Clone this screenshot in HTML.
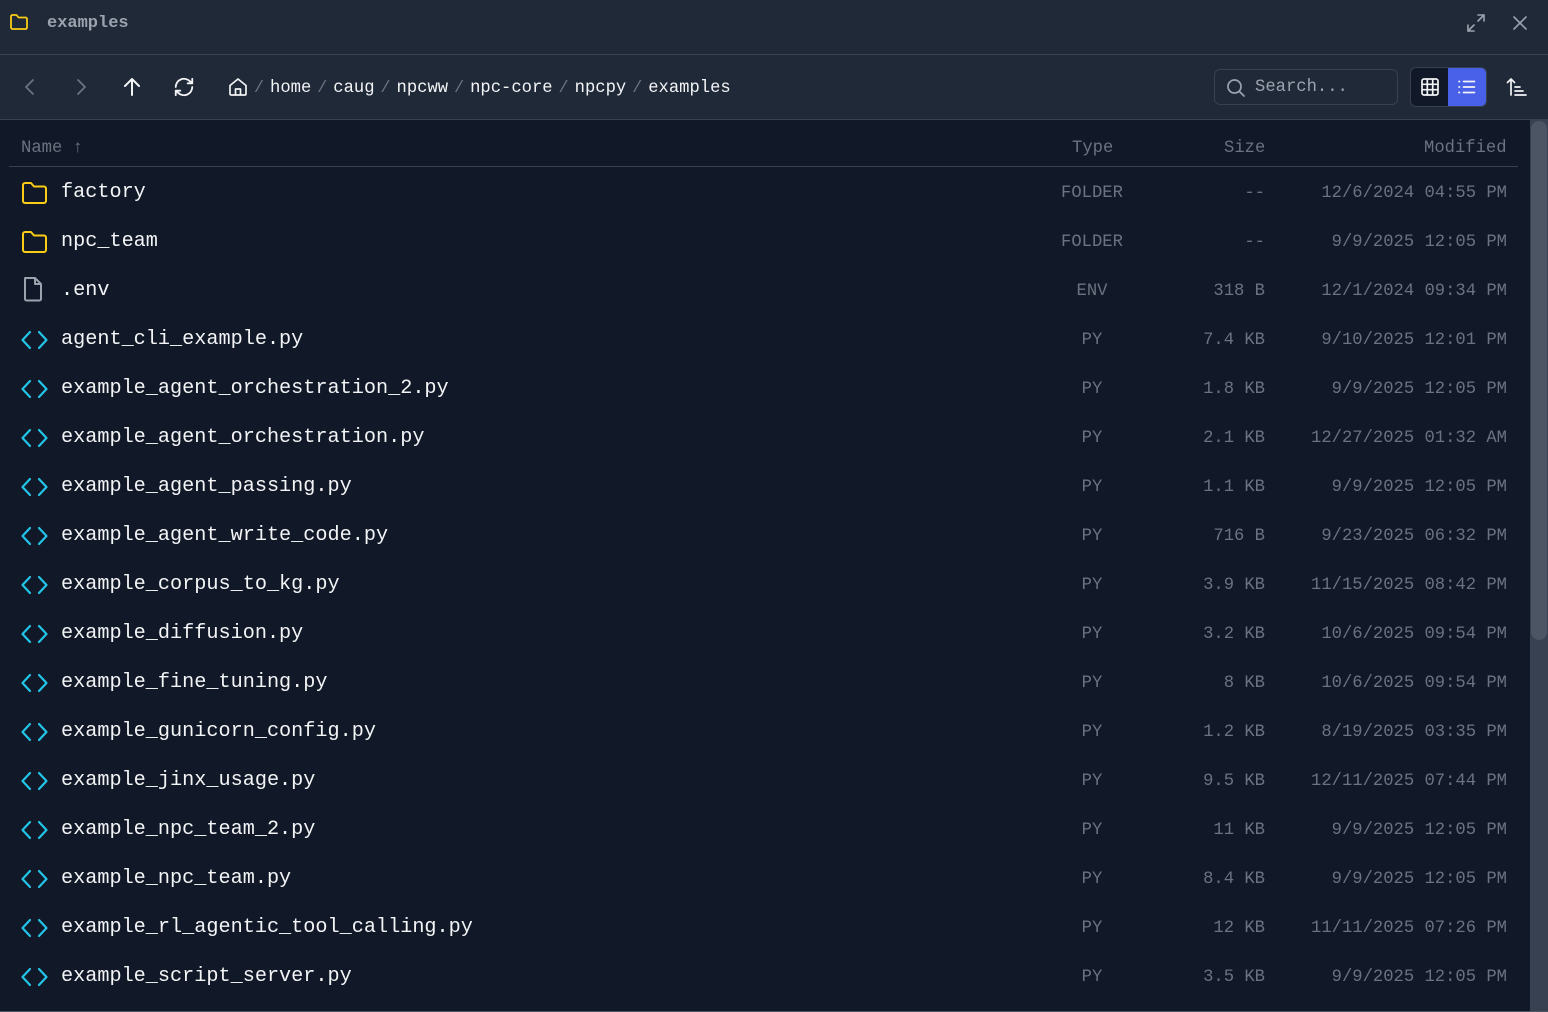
<!DOCTYPE html>
<html><head><meta charset="utf-8"><style>
*{margin:0;padding:0;box-sizing:border-box}
body{width:1548px;height:1012px;background:#111827;font-family:"Liberation Mono",monospace;overflow:hidden;position:relative;color:#e5e7eb}
.abs{position:absolute}
#title{left:0;top:0;width:1548px;height:55px;background:#1f2937;border-bottom:1px solid #374151}
#tool{left:0;top:55px;width:1548px;height:65px;background:#1f2937;border-bottom:1px solid #374151}
.t{white-space:pre;line-height:20px}
.hdr{color:#6b7280;font-size:17.2px}
.row{position:absolute;left:0;width:1530px;height:49px}
.nm{position:absolute;left:61px;top:15px;font-size:20.2px;color:#f3f4f6;white-space:pre;line-height:22px}
.ty{position:absolute;left:1042px;width:100px;text-align:center;top:17px;font-size:17.2px;color:#6b7280;line-height:20px}
.sz{position:absolute;right:265px;top:17px;font-size:17.2px;color:#6b7280;line-height:20px;white-space:pre}
.md{position:absolute;right:23px;top:17px;font-size:17.2px;color:#6b7280;line-height:20px;white-space:pre}
.ic{position:absolute;left:20px;top:12px}
.bc{color:#f3f4f6;font-size:17.2px}
.sep{color:#6b7280;font-size:17px;display:inline-block;width:22px;text-align:center}
</style></head><body>
<div id="title" class="abs">
<svg class="abs" style="left:9px;top:13px" width="20" height="18" viewBox="0 0 20 18" fill="none" stroke="#facc15" stroke-width="1.8" stroke-linejoin="round"><path d="M2 3.5a1.5 1.5 0 0 1 1.5-1.5h4l2 2.5h7a1.5 1.5 0 0 1 1.5 1.5v8.5a1.5 1.5 0 0 1-1.5 1.5h-13A1.5 1.5 0 0 1 2 14.5z"/></svg>
<div class="abs t" style="left:47px;top:14px;font-size:17px;font-weight:bold;color:#9ca3af">examples</div>
<svg class="abs" style="left:1466px;top:13px" width="20" height="20" viewBox="0 0 20 20" fill="none" stroke="#9ca3af" stroke-width="1.6" stroke-linecap="round"><path d="M12 2h6v6M18 2l-6 6M8 18H2v-6M2 18l6-6"/></svg>
<svg class="abs" style="left:1512px;top:15px" width="16" height="16" viewBox="0 0 16 16" stroke="#9ca3af" stroke-width="1.6" stroke-linecap="round"><path d="M2 2l12 12M14 2L2 14"/></svg>
</div>
<div id="tool" class="abs">
<svg class="abs" style="left:22px;top:23px" width="16" height="18" viewBox="0 0 16 18" fill="none" stroke="#6b7280" stroke-width="1.8" stroke-linecap="round" stroke-linejoin="round"><path d="M11 2L4 9l7 7"/></svg>
<svg class="abs" style="left:73px;top:23px" width="16" height="18" viewBox="0 0 16 18" fill="none" stroke="#6b7280" stroke-width="1.8" stroke-linecap="round" stroke-linejoin="round"><path d="M5 2l7 7-7 7"/></svg>
<svg class="abs" style="left:121px;top:21px" width="22" height="22" viewBox="0 0 22 22" fill="none" stroke="#f3f4f6" stroke-width="2" stroke-linecap="round" stroke-linejoin="round"><path d="M11 19V3M4 10l7-7 7 7"/></svg>
<svg class="abs" style="left:173px;top:21px" width="22" height="22" viewBox="0 0 24 24" fill="none" stroke="#f3f4f6" stroke-width="2" stroke-linecap="round" stroke-linejoin="round"><path d="M3 12a9 9 0 0 1 15.5-6.2L21 8M21 3v5h-5M21 12a9 9 0 0 1-15.5 6.2L3 16M3 21v-5h5"/></svg>
<svg class="abs" style="left:228px;top:22px" width="20" height="20" viewBox="0 0 20 20" fill="none" stroke="#f3f4f6" stroke-width="1.7" stroke-linejoin="round"><path d="M2 8.5L10 2l8 6.5V17a1 1 0 0 1-1 1H3a1 1 0 0 1-1-1z"/><path d="M7.5 18v-6h5v6"/></svg>
<div class="abs t" style="left:248px;top:23px"><span class="sep">/</span><span class="bc">home</span><span class="sep">/</span><span class="bc">caug</span><span class="sep">/</span><span class="bc">npcww</span><span class="sep">/</span><span class="bc">npc-core</span><span class="sep">/</span><span class="bc">npcpy</span><span class="sep">/</span><span class="bc">examples</span></div>
<div class="abs" style="left:1214px;top:14px;width:184px;height:36px;border:1px solid #374151;border-radius:6px;background:#1f2937"></div>
<svg class="abs" style="left:1226px;top:23px" width="20" height="20" viewBox="0 0 20 20" fill="none" stroke="#9ca3af" stroke-width="1.7" stroke-linecap="round"><circle cx="8.5" cy="8.5" r="6.5"/><path d="M13.5 13.5L18 18"/></svg>
<div class="abs t" style="left:1255px;top:23px;font-size:17.2px;color:#9ca3af">Search...</div>
<div class="abs" style="left:1410px;top:12px;width:77px;height:40px;border:1px solid #374151;border-radius:6px;background:#111827;overflow:hidden"><div class="abs" style="left:37px;top:0;width:40px;height:40px;background:#4961e8"></div></div>
<svg class="abs" style="left:1420px;top:22px" width="20" height="20" viewBox="0 0 20 20" fill="none" stroke="#f3f4f6" stroke-width="1.7"><rect x="2" y="2" width="16" height="16" rx="2"/><path d="M7.3 2v16M12.7 2v16M2 7.3h16M2 12.7h16"/></svg>
<svg class="abs" style="left:1457px;top:22px" width="20" height="20" viewBox="0 0 20 20" stroke="#f3f4f6" stroke-width="1.7" stroke-linecap="round"><path d="M6.5 4.5h11M6.5 10h11M6.5 15.5h11M2 4.5h.5M2 10h.5M2 15.5h.5"/></svg>
<svg class="abs" style="left:1506px;top:22px" width="22" height="20" viewBox="0 0 22 20" fill="none" stroke="#f3f4f6" stroke-width="1.7" stroke-linecap="round" stroke-linejoin="round"><path d="M5 18V2M1.5 5.5L5 2l3.5 3.5M9 10h5M9 14h8M9 18h11"/></svg>
</div>
<div class="abs t hdr" style="left:21px;top:139px">Name ↑</div>
<div class="abs t hdr" style="left:1072px;top:139px">Type</div>
<div class="abs t hdr" style="left:1224px;top:139px">Size</div>
<div class="abs t hdr" style="left:1424px;top:139px">Modified</div>
<div class="abs" style="left:9px;top:166px;width:1509px;height:1px;background:#374151"></div>
<div class="abs" style="left:1530px;top:120px;width:18px;height:892px;background:#374151"></div>
<div class="abs" style="left:1531px;top:121px;width:16px;height:519px;background:#4b5563;border-radius:8px"></div>
<div class="abs" style="left:0;top:1011px;width:1548px;height:1px;background:#4b5563"></div>
<div id="rows"></div>
<script>
var F='<svg width="30" height="26" viewBox="0 0 30 26" fill="none" stroke="#facc15" stroke-width="2" stroke-linejoin="round"><path d="M3 5a2 2 0 0 1 2-2h6l3 3.5h10a2 2 0 0 1 2 2V21a2 2 0 0 1-2 2H5a2 2 0 0 1-2-2z"/></svg>';
var E='<svg width="30" height="28" viewBox="0 0 30 28" fill="none" stroke="#9ca3af" stroke-width="2" stroke-linejoin="round"><path d="M5 3h10l6 6v15a1.5 1.5 0 0 1-1.5 1.5h-13A1.5 1.5 0 0 1 5 24V4.5A1.5 1.5 0 0 1 6.5 3z"/><path d="M15 3v6h6"/></svg>';
var C='<svg width="30" height="26" viewBox="0 0 30 26" fill="none" stroke="#22c5e8" stroke-width="2.2" stroke-linecap="round" stroke-linejoin="round"><path d="M10 5l-7.5 8 7.5 8M19 5l7.5 8-7.5 8"/></svg>';
var d=[["factory",F,"FOLDER","--","12/6/2024 04:55 PM"],["npc_team",F,"FOLDER","--","9/9/2025 12:05 PM"],[".env",E,"ENV","318 B","12/1/2024 09:34 PM"],
["agent_cli_example.py",C,"PY","7.4 KB","9/10/2025 12:01 PM"],["example_agent_orchestration_2.py",C,"PY","1.8 KB","9/9/2025 12:05 PM"],
["example_agent_orchestration.py",C,"PY","2.1 KB","12/27/2025 01:32 AM"],["example_agent_passing.py",C,"PY","1.1 KB","9/9/2025 12:05 PM"],
["example_agent_write_code.py",C,"PY","716 B","9/23/2025 06:32 PM"],["example_corpus_to_kg.py",C,"PY","3.9 KB","11/15/2025 08:42 PM"],
["example_diffusion.py",C,"PY","3.2 KB","10/6/2025 09:54 PM"],["example_fine_tuning.py",C,"PY","8 KB","10/6/2025 09:54 PM"],
["example_gunicorn_config.py",C,"PY","1.2 KB","8/19/2025 03:35 PM"],["example_jinx_usage.py",C,"PY","9.5 KB","12/11/2025 07:44 PM"],
["example_npc_team_2.py",C,"PY","11 KB","9/9/2025 12:05 PM"],["example_npc_team.py",C,"PY","8.4 KB","9/9/2025 12:05 PM"],
["example_rl_agentic_tool_calling.py",C,"PY","12 KB","11/11/2025 07:26 PM"],["example_script_server.py",C,"PY","3.5 KB","9/9/2025 12:05 PM"]];
var h='';d.forEach(function(r,i){var top=167+49*i;var it=r[1]==E?10:13;
h+='<div class="row" style="top:'+top+'px"><div class="ic" style="top:'+it+'px">'+r[1]+'</div><div class="nm">'+r[0]+'</div><div class="ty">'+r[2]+'</div><div class="sz">'+r[3]+'</div><div class="md">'+r[4]+'</div></div>';});
document.getElementById('rows').innerHTML=h;
</script>
</body></html>
